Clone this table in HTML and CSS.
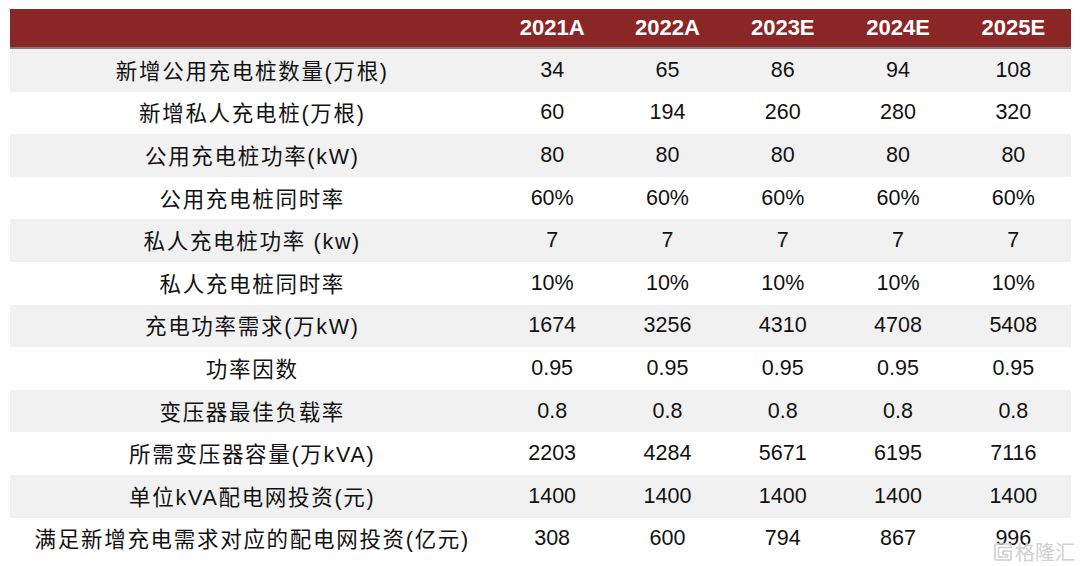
FILE: index.html
```html
<!DOCTYPE html>
<html lang="zh">
<head>
<meta charset="utf-8">
<link rel="stylesheet" href="styles.css">
</head>
<body>
<div class="table">
  <div class="row head">
    <div class="label"></div>
    <div class="cell">2021A</div><div class="cell">2022A</div><div class="cell">2023E</div><div class="cell">2024E</div><div class="cell">2025E</div>
  </div>
  <div class="row alt"><div class="label">新增公用充电桩数量(万根)</div><div class="cell">34</div><div class="cell">65</div><div class="cell">86</div><div class="cell">94</div><div class="cell">108</div></div>
  <div class="row"><div class="label">新增私人充电桩(万根)</div><div class="cell">60</div><div class="cell">194</div><div class="cell">260</div><div class="cell">280</div><div class="cell">320</div></div>
  <div class="row alt"><div class="label">公用充电桩功率(kW)</div><div class="cell">80</div><div class="cell">80</div><div class="cell">80</div><div class="cell">80</div><div class="cell">80</div></div>
  <div class="row"><div class="label">公用充电桩同时率</div><div class="cell">60%</div><div class="cell">60%</div><div class="cell">60%</div><div class="cell">60%</div><div class="cell">60%</div></div>
  <div class="row alt"><div class="label">私人充电桩功率 (kw)</div><div class="cell">7</div><div class="cell">7</div><div class="cell">7</div><div class="cell">7</div><div class="cell">7</div></div>
  <div class="row"><div class="label">私人充电桩同时率</div><div class="cell">10%</div><div class="cell">10%</div><div class="cell">10%</div><div class="cell">10%</div><div class="cell">10%</div></div>
  <div class="row alt"><div class="label">充电功率需求(万kW)</div><div class="cell">1674</div><div class="cell">3256</div><div class="cell">4310</div><div class="cell">4708</div><div class="cell">5408</div></div>
  <div class="row"><div class="label">功率因数</div><div class="cell">0.95</div><div class="cell">0.95</div><div class="cell">0.95</div><div class="cell">0.95</div><div class="cell">0.95</div></div>
  <div class="row alt"><div class="label">变压器最佳负载率</div><div class="cell">0.8</div><div class="cell">0.8</div><div class="cell">0.8</div><div class="cell">0.8</div><div class="cell">0.8</div></div>
  <div class="row"><div class="label">所需变压器容量(万kVA)</div><div class="cell">2203</div><div class="cell">4284</div><div class="cell">5671</div><div class="cell">6195</div><div class="cell">7116</div></div>
  <div class="row alt"><div class="label">单位kVA配电网投资(元)</div><div class="cell">1400</div><div class="cell">1400</div><div class="cell">1400</div><div class="cell">1400</div><div class="cell">1400</div></div>
  <div class="row"><div class="label">满足新增充电需求对应的配电网投资(亿元)</div><div class="cell">308</div><div class="cell">600</div><div class="cell">794</div><div class="cell">867</div><div class="cell">996</div></div>
</div>
<div class="watermark">
  <svg class="wm-icon" width="22" height="22" viewBox="0 0 22 22"><path d="M19 3H4a1 1 0 0 0-1 1v14a1 1 0 0 0 1 1h14a1 1 0 0 0 1-1V10h-8v3.5h4.5V16H6.5V6.5H19z" fill="none" stroke="#cfcfcf" stroke-width="1.6"/></svg>
  <span class="wm-text">格隆汇</span>
</div>
</body>
</html>
```
FILE: styles.css
```css
html, body { margin: 0; padding: 0; background: #fff; }
body {
  font-family: "Liberation Sans", "Noto Sans CJK SC", sans-serif;
  color: #111;
  width: 1080px;
  height: 566px;
  overflow: hidden;
  position: relative;
}
.table {
  margin: 9px 0 0 10px;
  width: 1061px;
}
.row {
  display: grid;
  grid-template-columns: 484.5px repeat(5, 115.3px);
  height: 42.6px;
  align-items: center;
  font-size: 21.5px;
}
.row.head {
  background: #8b2627;
  height: 38px;
  border-bottom: 2px solid #7d7d7d;
  color: #fff;
  font-weight: bold;
  font-size: 22px;
}
.row.alt { background: #f1f1f1; }
.label {
  text-align: center;
  letter-spacing: 1.7px;
  white-space: nowrap;
  margin-top: -2px;
}
.cell {
  text-align: center;
  white-space: nowrap;
}
.watermark {
  position: absolute;
  right: 5px;
  bottom: 3px;
  display: flex;
  align-items: center;
  gap: 1px;
}
.wm-text {
  color: #d0d0d0;
  font-size: 20px;
  font-family: "Noto Sans CJK SC", sans-serif;
  line-height: 22px;
}
```
